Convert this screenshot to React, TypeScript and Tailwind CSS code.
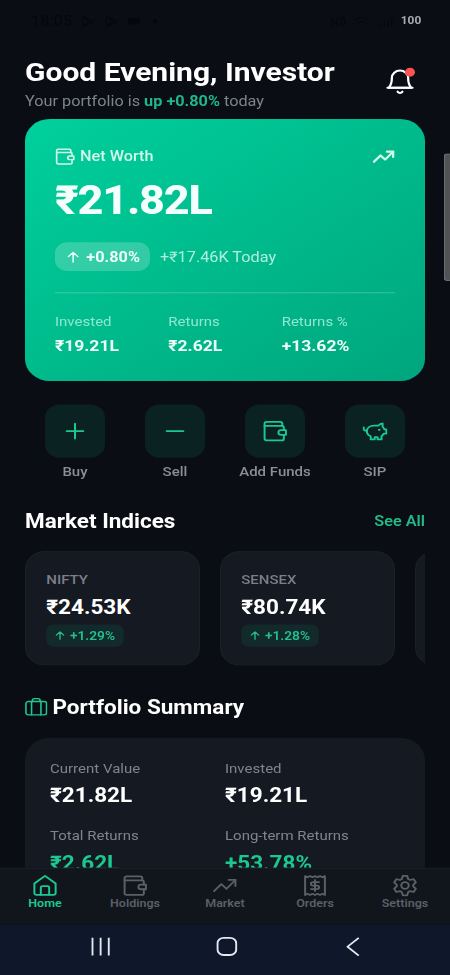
import type { ReactNode } from "react";

function Icon({ size, className, width = 1.5, children }: { size: number; className?: string; width?: number; children: ReactNode }) {
  return (
    <svg
      width={size}
      height={size}
      viewBox="0 0 24 24"
      fill="none"
      stroke="currentColor"
      strokeWidth={width}
      strokeLinecap="round"
      strokeLinejoin="round"
      className={className}
    >
      {children}
    </svg>
  );
}

type IconProps = { size: number; className?: string; width?: number };

const Wallet = (p: IconProps) => (
  <Icon {...p}>
    <path d="M20.500 11V8.200A1.800 1.800 0 0 0 18.700 6.400H2V20a2 2 0 0 0 2 2h14.700a1.800 1.800 0 0 0 1.800-1.800V16" />
    <path d="M2 6.400V4a2 2 0 0 1 2-2h13a2 2 0 0 1 2 2v2.400" />
    <path d="M22.500 11v5h-4.700a2.500 2.500 0 1 1 0-5z" />
  </Icon>
);

const Trend = (p: IconProps) => (
  <Icon {...p}>
    <path d="M1.500 18 8.500 10.500l5 5L22 6" />
    <path d="M15.500 6H22v6.500" />
  </Icon>
);

const ArrowUp = (p: IconProps) => (
  <Icon {...p}>
    <path d="M12 20V4M5 11l7-7 7 7" />
  </Icon>
);

const House = (p: IconProps) => (
  <Icon {...p}>
    <path d="M1.800 9.800 12 1.500l10.200 8.300V20a2 2 0 0 1-2 2H3.800a2 2 0 0 1-2-2z" />
    <path d="M8 22V14a1.500 1.500 0 0 1 1.500-1.500h5A1.500 1.500 0 0 1 16 14v8" />
  </Icon>
);

const Receipt = (p: IconProps) => (
  <Icon {...p}>
    <path d="M2.500 1.800l2.400 1.300 2.300-1.300 2.400 1.300L12 1.800l2.400 1.300 2.400-1.300 2.300 1.300 2.400-1.300v20.400l-2.400-1.300-2.300 1.300-2.400-1.300L12 22.200l-2.400-1.300-2.400 1.300-2.300-1.300-2.400 1.300z" />
    <path d="M15.800 8.200H10a1.900 1.900 0 0 0 0 3.800h4a1.900 1.900 0 0 1 0 3.800H8.200M12 6v12" />
  </Icon>
);

const Gear = (p: IconProps) => (
  <Icon {...p}>
    <circle cx="12" cy="12" r="3.600" />
    <path d="M9.900 1.500h4.200l.9 3.400 1.900 1.100 3.400-1 2.100 3.700-2.500 2.500v1.600l2.500 2.500-2.100 3.700-3.400-1-1.900 1.100-.9 3.400H9.900L9 19.100 7.100 18l-3.400 1-2.100-3.700 2.500-2.500v-1.600L1.600 8.700 3.700 5l3.400 1L9 4.900z" />
  </Icon>
);

const Bell = (p: IconProps) => (
  <Icon {...p}>
    <path d="M18.500 9a6.500 6.500 0 0 0-13 0c0 6-2.500 9-2.500 9h18s-2.500-3-2.500-9z" />
    <path d="M2 18h20M13.900 21.500a2.200 2.200 0 0 1-3.800 0" />
  </Icon>
);

const Piggy = (p: IconProps) => (
  <Icon {...p}>
    <path d="M1.200 8c-.6 2.200.6 3.800 3 3.700M4.200 12.200C4.200 8.300 7.300 6 11 6h4.400c1-1.400 2.200-2.200 3.900-2.400v3.900c.8.7 1.300 1.600 1.600 2.600h2v4.600h-2.400c-.5 1.100-1.200 1.900-2.200 2.500V21h-3.800v-2.500h-2.800V21H7.900v-3.500c-2.200-.9-3.700-2.700-3.700-5.300z" />
    <path d="M16 10.600h.1" strokeWidth="2.400" />
  </Icon>
);

const Briefcase = (p: IconProps) => (
  <Icon {...p}>
    <rect x="1" y="4.500" width="22" height="16" rx="2.500" />
    <path d="M8 4.500V3a2 2 0 0 1 2-2h4a2 2 0 0 1 2 2v1.500M7 4.500v16M17 4.500v16" />
  </Icon>
);

const Plus = (p: IconProps) => (
  <Icon {...p}>
    <path d="M4 12h16M12 4v16" />
  </Icon>
);

const Minus = (p: IconProps) => (
  <Icon {...p}>
    <path d="M4 12h16" />
  </Icon>
);

const totals = [
  { label: "Invested", value: "₹19.21L" },
  { label: "Returns", value: "₹2.62L" },
  { label: "Returns %", value: "+13.62%" },
];

const actions = [
  { label: "Buy", icon: Plus },
  { label: "Sell", icon: Minus },
  { label: "Add Funds", icon: Wallet },
  { label: "SIP", icon: Piggy },
];

const indices = [
  { name: "NIFTY", value: "₹24.53K", change: "+1.29%" },
  { name: "SENSEX", value: "₹80.74K", change: "+1.28%" },
];

const summary = [
  { label: "Current Value", value: "₹21.82L", up: false },
  { label: "Invested", value: "₹19.21L", up: false },
  { label: "Total Returns", value: "₹2.62L", up: true },
  { label: "Long-term Returns", value: "+53.78%", up: true },
];

const tabs = [
  { label: "Home", icon: House },
  { label: "Holdings", icon: Wallet },
  { label: "Market", icon: Trend },
  { label: "Orders", icon: Receipt },
  { label: "Settings", icon: Gear },
];

function StatusBar() {
  return (
    <div className="flex h-[38px] shrink-0 items-center justify-between pl-[25px] pr-[23px] text-[12.5px] text-[#05070b]">
      <div className="flex items-center gap-1.5">
        <span className="tracking-[0.3px]">18:05</span>
        <Icon size={13}><path d="M4 3l16 9-16 9zM4 3l9 9-9 9" /></Icon>
        <Icon size={13}><path d="M4 3l16 9-16 9zM4 3l9 9-9 9" /></Icon>
        <span className="h-1.5 w-2.5 rounded-sm bg-[#05070b]" />
        <span className="ml-1 size-1 rounded-full bg-[#05070b]" />
      </div>
      <div className="flex items-center gap-1.5">
        <Icon size={13}><path d="M3 19V6l7 12V6M15 6c3 4 3 8 0 12M19 4c4 5 4 11 0 16" /></Icon>
        <Icon size={13}><path d="M2 9c6-5 14-5 20 0M6 14c4-3 8-3 12 0M12 19h.1" /></Icon>
        <Icon size={13}><path d="M4 20v-4M10 20v-8M16 20V8M21 20V4" /></Icon>
        <span className="pt-px text-[9.5px] font-bold text-[#a9abaf]">100</span>
      </div>
    </div>
  );
}

function Header() {
  return (
    <header className="flex h-[69px] shrink-0 items-start justify-between px-5 pt-3">
      <div>
        <h1 className="text-2xl leading-[30px] font-bold text-white">Good Evening, Investor</h1>
        <p className="text-[13px] leading-[22px] text-[#7f838b]">
          Your portfolio is <span className="font-bold text-[#1fb88a]">up +0.80%</span> today
        </p>
      </div>
      <div className="relative mt-[11px] mr-2">
        <Bell size={24} className="text-white" width={1.8} />
        <span className="absolute top-0 right-0 size-2 rounded-full bg-[#fb5350]" />
      </div>
    </header>
  );
}

function NetWorthCard() {
  return (
    <section className="mx-5 h-[236px] shrink-0 rounded-[20px] bg-linear-to-br from-[#00d09c] to-[#00a67d] px-6 pt-6">
      <div className="flex h-5 items-center justify-between text-[#d2f8ea]">
        <div className="flex items-center gap-1">
          <Wallet size={16} width={2} />
          <span className="text-[13px] font-medium">Net Worth</span>
        </div>
        <Trend size={18} width={2.5} />
      </div>
      <div className="mt-[9px] h-[42px] text-4xl leading-[42px] font-extrabold tracking-[-1px] text-[#f4fffc]">₹21.82L</div>
      <div className="mt-4 flex items-center gap-2">
        <span className="flex h-[26px] w-[76px] items-center justify-center gap-1 rounded-[10px] bg-white/20 pt-px text-[13px] font-bold text-[#edfff9]">
          <ArrowUp size={13} width={2.3} />
          +0.80%
        </span>
        <span className="pt-px text-[13px] text-[#b0efdc]">+₹17.46K Today</span>
      </div>
      <div className="mt-[19px] h-px bg-white/20" />
      <div className="mt-[15px] grid grid-cols-3">
        {totals.map(t => (
          <div key={t.label}>
            <div className="text-xs leading-5 text-[#8fe7cd]">{t.label}</div>
            <div className="mt-px text-sm leading-[22px] font-bold text-[#effffa]">{t.value}</div>
          </div>
        ))}
      </div>
    </section>
  );
}

function QuickActions() {
  return (
    <div className="mx-5 mt-[20.5px] flex h-[70px] shrink-0">
      {actions.map(({ label, icon: Glyph }) => (
        <div key={label} className="flex flex-1 flex-col items-center text-[#1cc890]">
          <div className="flex size-12 items-center justify-center rounded-xl bg-[#0a2322]">
            <Glyph size={20} width={1.9} />
          </div>
          <span className="mt-[3px] text-xs leading-[18px] font-medium whitespace-nowrap text-[#8b8e95]">{label}</span>
        </div>
      ))}
    </div>
  );
}

function MarketIndices() {
  return (
    <section className="mt-[23.5px] shrink-0 px-5">
      <div className="flex h-6 items-center justify-between">
        <h2 className="text-lg font-bold text-white">Market Indices</h2>
        <span className="text-[13px] font-semibold text-[#24b987]">See All</span>
      </div>
      <div className="mt-[15px] flex gap-4 overflow-hidden">
        {indices.map(i => (
          <div key={i.name} className="h-[103px] w-[140px] shrink-0 rounded-2xl border border-[#1b1f27] bg-[#151922] px-4 pt-4">
            <div className="text-xs leading-[18px] font-medium text-[#7b7f89]">{i.name}</div>
            <div className="mt-1 text-lg leading-6 font-bold text-white">{i.value}</div>
            <span className="mt-[3px] flex h-5 w-[62px] items-center justify-center gap-[3px] rounded-md bg-[#122a2b] pr-px pt-0.5 text-[11px] font-semibold text-[#25bf8e]">
              <ArrowUp size={10} width={2.6} className="-mt-0.5" />
              {i.change}
            </span>
          </div>
        ))}
        <div className="h-[103px] w-[140px] shrink-0 rounded-2xl border border-[#1b1f27] bg-[#151922]" />
      </div>
    </section>
  );
}

function PortfolioSummary() {
  return (
    <section className="mt-[25.5px] shrink-0 px-5">
      <div className="flex h-6 items-center gap-1">
        <Briefcase size={18} className="text-[#1cc890]" width={1.7} />
        <h2 className="text-lg font-bold text-white">Portfolio Summary</h2>
      </div>
      <div className="mt-[15px] grid h-[160px] grid-cols-2 content-start gap-y-[14px] rounded-[20px] bg-[#151922] px-5 pt-[18px]">
        {summary.map(s => (
          <div key={s.label}>
            <div className="text-xs leading-5 text-[#80848d]">{s.label}</div>
            <div className={s.up ? "mt-[2.5px] text-lg leading-6 font-bold text-[#1cc890]" : "mt-[2.5px] text-lg leading-6 font-bold text-white"}>
              {s.value}
            </div>
          </div>
        ))}
      </div>
    </section>
  );
}

function TabBar() {
  return (
    <nav className="flex h-[51px] shrink-0 border-t border-[#1b2026] bg-[#10161c] pt-[5px]">
      {tabs.map(({ label, icon: Glyph }, i) => (
        <div key={label} className={i === 0 ? "flex flex-1 flex-col items-center text-[#1cc890]" : "flex flex-1 flex-col items-center text-[#5b5f66]"}>
          <Glyph size={20} width={1.9} />
          <span className="text-[10px] leading-3 font-semibold">{label}</span>
        </div>
      ))}
    </nav>
  );
}

function SystemNav() {
  return (
    <div className="flex h-[46px] shrink-0 items-center justify-between bg-[#0f172a] pr-[72px] pb-[5px] pl-[72px] text-[#e4e8f0]">
      <svg width="17" height="18" viewBox="0 0 17 18" stroke="currentColor" strokeWidth="1.5">
        <path d="M2 1v16M8.500 1v16M15 1v16" />
      </svg>
      <svg width="17" height="18" viewBox="0 0 17 18" fill="none" stroke="currentColor" strokeWidth="1.600" className="-ml-[3px]">
        <rect x="1" y="1" width="15" height="15.500" rx="5" />
      </svg>
      <svg width="11" height="18" viewBox="0 0 11 18" fill="none" stroke="currentColor" strokeWidth="1.500">
        <path d="M10 1 1 9l9 8" />
      </svg>
    </div>
  );
}

// laid out on a 360dp wide canvas, then scaled up to the window
export default function App() {
  return (
    <div className="h-[975px] w-[450px] overflow-hidden bg-[#0a0d14]">
      <div className="relative flex h-[877.5px] w-[360px] origin-top-left scale-x-[1.25] scale-y-[1.1111] flex-col font-['Roboto',sans-serif]">
        <div className="flex min-h-0 flex-1 flex-col overflow-hidden">
          <StatusBar />
          <Header />
          <NetWorthCard />
          <QuickActions />
          <MarketIndices />
          <PortfolioSummary />
        </div>
        <TabBar />
        <SystemNav />
        <div className="absolute top-[138px] right-0 h-[115px] w-[5px] rounded-l-[3px] border border-r-0 border-[#6a6c6f] bg-[#515355]" />
      </div>
    </div>
  );
}
